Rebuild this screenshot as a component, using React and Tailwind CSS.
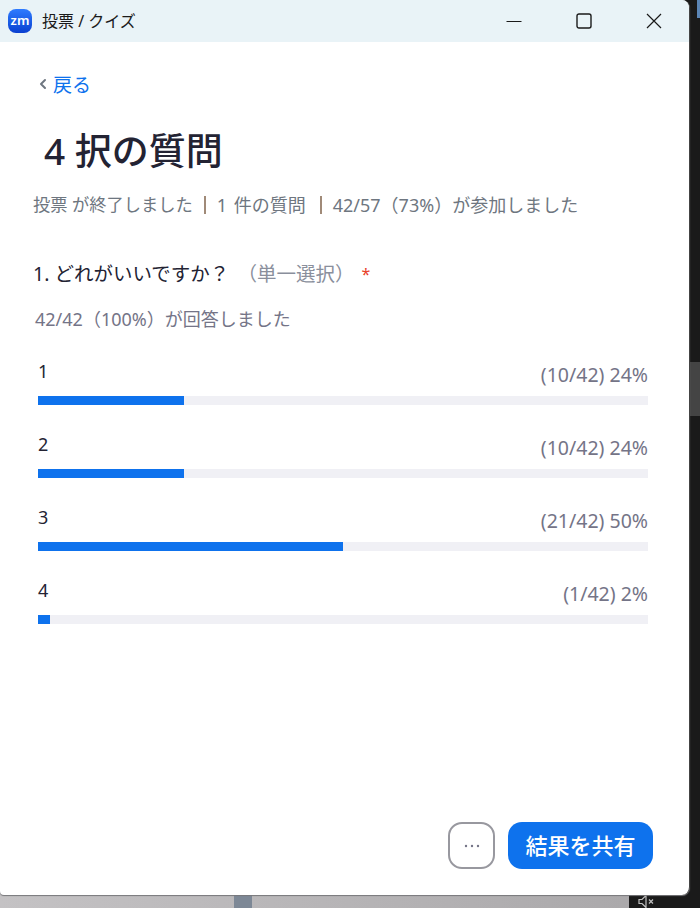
import React from 'react'
import { ChevronLeft } from 'lucide-react'

const font = 'font-["Noto_Sans","Noto_Sans_CJK_JP",sans-serif]'

const answers = [
  { label: '1', result: '(10/42) 24%', width: 'w-[24%]' },
  { label: '2', result: '(10/42) 24%', width: 'w-[24%]' },
  { label: '3', result: '(21/42) 50%', width: 'w-[50%]' },
  { label: '4', result: '(1/42) 2%', width: 'w-[2%]' },
]

const ZoomLogo = () => (
  <div className="flex h-6 w-6 items-center justify-center rounded-lg bg-gradient-to-b from-[#2f7bff] to-[#0b3fd0] pb-[2px] text-[13px] font-semibold leading-none text-white">
    zm
  </div>
)

const TitleBar = () => (
  <div className="flex h-[42px] shrink-0 items-center justify-between bg-[#e9f3f7] pl-2 pr-[27px]">
    <div className="flex items-center gap-[10px]">
      <ZoomLogo />
      <span className="text-base text-[#1a1a1a]">投票 / クイズ</span>
    </div>
    <div className="flex items-center gap-[54px]">
      <svg width="16" height="16" viewBox="0 0 16 16" fill="none" stroke="#1a1a1a" strokeWidth="1">
        <path d="M0.5 8.5h15" />
      </svg>
      <svg width="16" height="16" viewBox="0 0 16 16" fill="none" stroke="#1a1a1a" strokeWidth="1.4">
        <rect x="1" y="1" width="14" height="14" rx="2" />
      </svg>
      <svg width="16" height="16" viewBox="0 0 16 16" fill="none" stroke="#1a1a1a" strokeWidth="1.2">
        <path d="M1 1l14 14M15 1L1 15" />
      </svg>
    </div>
  </div>
)

const AnswerRow = ({ label, result, width }) => (
  <div className="flex flex-col">
    <div className="flex h-[35px] items-start justify-between">
      <span className="text-lg leading-[20px] text-[#232333]">{label}</span>
      <span className="mt-[4px] text-[19.5px] leading-[20px] text-[#747487]">{result}</span>
    </div>
    <div className="h-[9px] w-full bg-[#f0f0f5]">
      <div className={`h-full bg-[#0e72ed] ${width}`} />
    </div>
  </div>
)

export default function App() {
  return (
    <div className={`relative h-[908px] w-[700px] overflow-hidden bg-gradient-to-r from-[#c4c2c4] to-[#a8a6a8] ${font}`}>
      {/* desktop behind the window */}
      <div className="absolute right-0 top-0 h-full w-[30px] bg-[#1a1a1a]">
        <div className="absolute left-[20px] top-[362px] h-[54px] w-[10px] bg-[#444]" />
        <div className="absolute left-[27px] top-0 h-[18px] w-[3px] bg-[#5b85b5]" />
      </div>
      <div className="absolute bottom-0 right-0 flex h-[14px] w-[71px] items-center bg-[#1a1a1a] pl-[9px]">
        <svg width="18" height="13" viewBox="0 0 18 13" fill="none" stroke="#c0c0c0" strokeWidth="1.2">
          <path d="M1 4.5h3l4-4v12l-4-4H1z" />
          <path d="M11 4.5l4 4M15 4.5l-4 4" />
        </svg>
      </div>
      <div className="absolute bottom-0 left-[234px] h-[13px] w-[18px] bg-[#7d8896]" />

      <div className="relative flex h-[895px] w-[690px] flex-col overflow-hidden rounded-bl-[4px] rounded-br-lg rounded-tr-lg border-r border-[#444] bg-white shadow-[0_1px_1px_#77777a]">
        <TitleBar />

        <div className="flex flex-1 flex-col pl-[33px] pr-[41px]">
          <div className="mt-[30px] flex items-center pl-[2px]">
            <ChevronLeft size={16} strokeWidth={3} className="mb-[3px] text-[#6e7680]" />
            <span className="ml-[2px] text-[19px] leading-[26px] text-[#0e72ed]">戻る</span>
          </div>

          <h1 className="ml-[11px] mt-[28px] text-[37px] font-medium leading-[50px] text-[#232333]">4 択の質問</h1>

          <div className="mt-[16px] flex items-center text-lg leading-[26px] text-[#6e7680]">
            <span className="text-[17.25px]">投票 が終了しました</span>
            <span className="mx-[11px] h-[18px] w-[2px] bg-[#a08a78]" />
            <span className="mr-[3px] [word-spacing:2px]">1 件の質問</span>
            <span className="mx-[11px] h-[18px] w-[2px] bg-[#a08a78]" />
            <span>42/57（73%）が参加しました</span>
          </div>

          <div className="mt-[43px] flex items-center text-[19.5px] leading-[26px]">
            <span className="text-[#232333]">1. どれがいいですか？</span>
            <span className="ml-[8px] text-[#8a8f9c]">（単一選択）</span>
            <span className="ml-[7px] text-base text-[#e8402a]">*</span>
          </div>

          <div className="ml-[2px] mt-[19px] text-lg leading-[26px] text-[#747487]">42/42（100%）が回答しました</div>

          <div className="ml-[5px] mt-[29px] flex flex-col gap-[29px]">
            {answers.map((a) => (
              <AnswerRow key={a.label} {...a} />
            ))}
          </div>

          <div className="mb-[26px] mr-[-5px] mt-auto flex items-center justify-end gap-[13px]">
            <button className="flex h-[47px] w-[47px] items-center justify-center rounded-[14px] border-2 border-[#98989f] text-[#747487]">
              <svg width="16" height="4" viewBox="0 0 16 4" fill="#747487">
                <circle cx="2" cy="2" r="1.2" />
                <circle cx="8" cy="2" r="1.2" />
                <circle cx="14" cy="2" r="1.2" />
              </svg>
            </button>
            <button className="flex h-[47px] w-[145px] items-center justify-center rounded-[14px] bg-[#0e72ed] text-[22px] font-medium text-white">
              結果を共有
            </button>
          </div>
        </div>
      </div>
    </div>
  )
}
